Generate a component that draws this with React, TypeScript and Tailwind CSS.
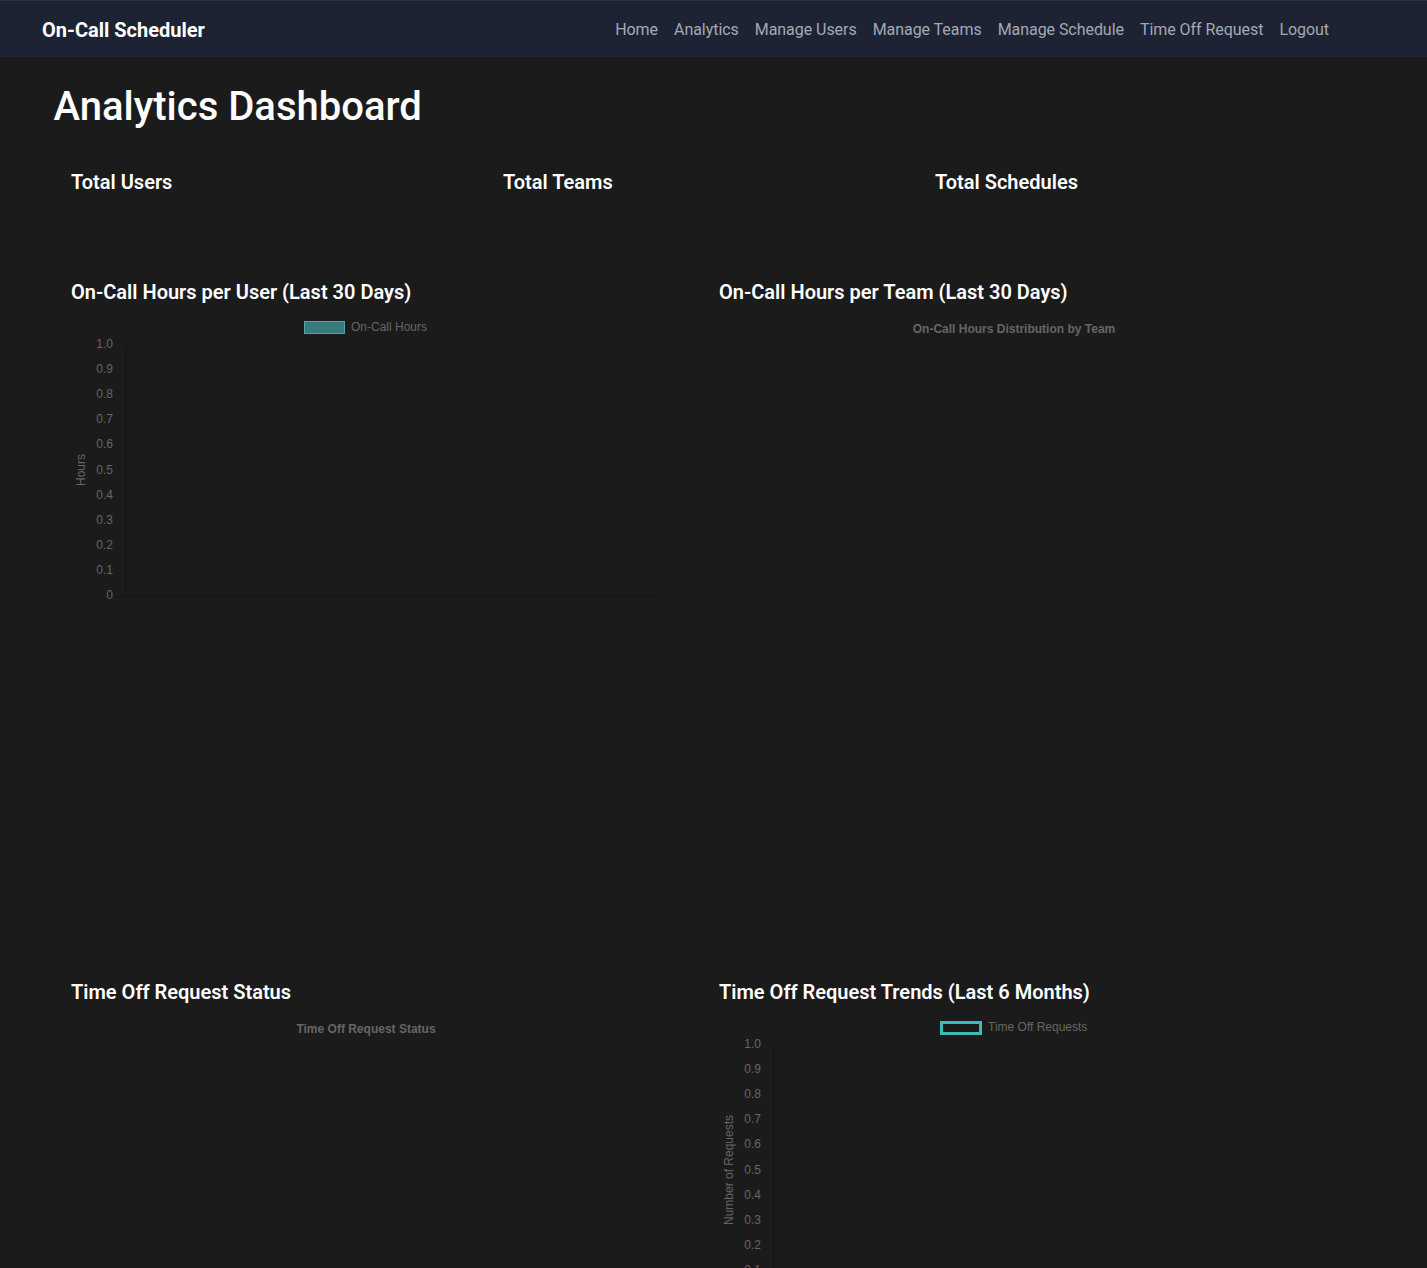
const navLinks = ["Home", "Analytics", "Manage Users", "Manage Teams", "Manage Schedule", "Time Off Request", "Logout"];
const ticks = ["1.0", "0.9", "0.8", "0.7", "0.6", "0.5", "0.4", "0.3", "0.2", "0.1", "0"];

const chartFont = { fontFamily: "'Liberation Sans', Arial, sans-serif" };

function AxisChart({
  legend,
  yTitle,
  outlined,
  height,
}: {
  legend: string;
  yTitle: string;
  outlined?: boolean;
  height: number;
}) {
  const top = 33;
  const step = 25.1;
  const legendTextX = outlined ? 269 : 280;
  const boxX = outlined ? 221 : 233;
  return (
    <svg width={590} height={height} className="block" style={chartFont}>
      {outlined ? (
        <rect x={boxX + 1.5} y={10.5} width={39} height={11} fill="#1b1b1b" stroke="#3fb8b8" strokeWidth={3} />
      ) : (
        <rect x={boxX + 0.5} y={9.5} width={40} height={12} fill="#367a7a" stroke="#45aaaa" strokeWidth={1} />
      )}
      <text x={legendTextX} y={19} fontSize={12} fill="#666">
        {legend}
      </text>
      <line x1={54.5} y1={top} x2={54.5} y2={top + step * 10 + 8} stroke="#151515" />
      {ticks.map((t, i) => {
        const y = Math.round(top + step * i) + 0.5;
        return (
          <g key={t}>
            <line x1={i === 10 ? 45 : 55} y1={y} x2={586} y2={y} stroke={i === 10 ? "#151515" : "#181818"} />
            <text x={42} y={y + 2} fontSize={12} fill="#666" textAnchor="end">
              {t}
            </text>
          </g>
        );
      })}
      <text
        x={11}
        y={158}
        fontSize={12}
        fill="#666"
        textAnchor="middle"
        dominantBaseline="middle"
        transform="rotate(-90 11 158)"
      >
        {yTitle}
      </text>
    </svg>
  );
}

function PieChart({ title }: { title: string }) {
  return (
    <svg width={590} height={590} className="block" style={chartFont}>
      <text x={295} y={21} fontSize={12} fontWeight="bold" fill="#666" textAnchor="middle">
        {title}
      </text>
    </svg>
  );
}

function Section({ title, children }: { title: string; children: React.ReactNode }) {
  return (
    <div className="flex flex-col">
      <h5 className="text-[20px] leading-6 font-semibold text-white mb-2">{title}</h5>
      {children}
    </div>
  );
}

export default function App() {
  return (
    <div className="min-h-[1268px] bg-[#1b1b1b] font-['Roboto',sans-serif]">
      <nav className="flex h-[57px] items-center border-t border-[#2c3142] bg-[#1e2333] pl-[42px] pr-[90px] pt-[2px]">
        <a className="text-[20px] font-bold text-white">On-Call Scheduler</a>
        <ul className="ml-auto flex items-center">
          {navLinks.map((l) => (
            <li key={l}>
              <a className="px-2 text-[16px] tracking-[-0.05px] text-[#a3a9b3]">{l}</a>
            </li>
          ))}
        </ul>
      </nav>

      <main className="mx-auto w-[1320px] pt-[26px]">
        <h1 className="text-[40px] leading-[48px] font-medium text-white">Analytics Dashboard</h1>

        <div className="ml-[17.5px] mt-[39px] grid grid-cols-[432px_432px_432px]">
          {["Total Users", "Total Teams", "Total Schedules"].map((t) => (
            <div key={t} className="h-[110px]">
              <h5 className="text-[20px] leading-6 font-semibold text-white">{t}</h5>
            </div>
          ))}
        </div>

        <div className="ml-[17.5px] grid grid-cols-[648px_648px] gap-y-[78px]">
          <Section title="On-Call Hours per User (Last 30 Days)">
            <AxisChart legend="On-Call Hours" yTitle="Hours" height={300} />
          </Section>
          <Section title="On-Call Hours per Team (Last 30 Days)">
            <PieChart title="On-Call Hours Distribution by Team" />
          </Section>
          <Section title="Time Off Request Status">
            <PieChart title="Time Off Request Status" />
          </Section>
          <Section title="Time Off Request Trends (Last 6 Months)">
            <AxisChart legend="Time Off Requests" yTitle="Number of Requests" outlined height={300} />
          </Section>
        </div>
      </main>
    </div>
  );
}
